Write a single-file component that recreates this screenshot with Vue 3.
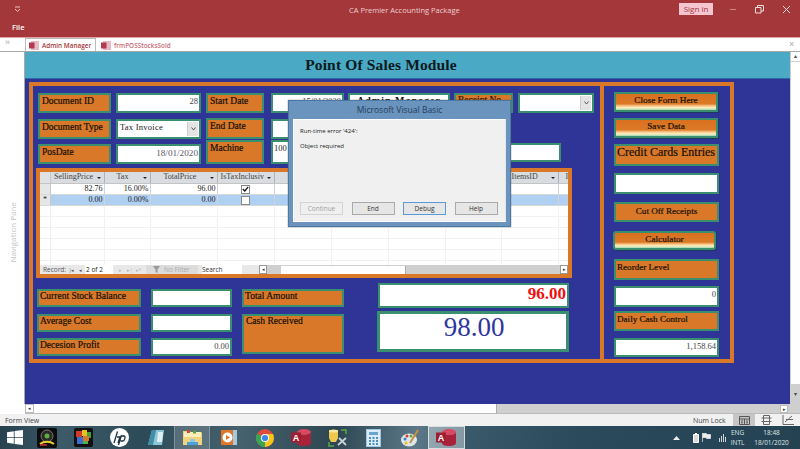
<script setup>
const columns = [
  { name: 'SellingPrice', cls: 'c1' }, { name: 'Tax', cls: 'c2' }, { name: 'TotalPrice', cls: 'c3' },
  { name: 'IsTaxInclusiv', cls: 'c4' }, { name: '', cls: 'c5' }, { name: '', cls: 'c6' },
  { name: '', cls: 'c7' }, { name: '', cls: 'c8' }, { name: 'ItemsID', cls: 'c9' }
]
const blankCols = ['c5', 'c6', 'c7', 'c8', 'c9']
const emptyRows = [1, 2, 3, 4, 5, 6]
</script>

<template>
  <div class="app">
    <header class="titlebar">
      <div class="title-top">
        <svg class="qa" width="8" height="6" viewBox="0 0 8 6"><path d="M1 1h5M1 3l2.500 2.500L6 3" fill="none" stroke="#e8c4c6" stroke-width="1"/></svg>
        <span class="app-title">CA Premier Accounting Package</span>
        <span class="signin">Sign in</span>
        <div class="winctl">
          <svg width="8" height="8" viewBox="0 0 8 8"><path d="M1 4.500h6" stroke="#c98a8c"/></svg>
          <svg width="9" height="9" viewBox="0 0 9 9"><path d="M.5 2.500h5.500v5.500H.5zM2.500 2.500V.5H8.500V6H6" fill="none" stroke="#f3dcdd"/></svg>
          <svg width="9" height="9" viewBox="0 0 9 9"><path d="M1 1l7 7M8 1L1 8" stroke="#f3dcdd"/></svg>
        </div>
      </div>
      <div class="file">File</div>
    </header>

    <div class="tabs">
      <span class="chevrons">»</span>
      <div class="tab active">
        <svg class="tabicon" width="10" height="9" viewBox="0 0 10 9"><rect x="2" y="0" width="8" height="9" fill="#e8b8c4"/><rect x="0" y="1.500" width="5.500" height="6" fill="#b23a50"/></svg>
        <span>Admin Manager</span>
      </div>
      <div class="tab">
        <svg class="tabicon" width="10" height="9" viewBox="0 0 10 9"><rect x="2" y="0" width="8" height="9" fill="#e8b8c4"/><rect x="0" y="1.500" width="5.500" height="6" fill="#b23a50"/></svg>
        <span>frmPOSStocksSold</span>
      </div>
      <span class="tabclose">×</span>
    </div>

    <div class="main">
      <aside class="nav"><span>Navigation Pane</span></aside>
      <div class="form">
        <div class="form-header">Point Of Sales Module</div>
        <div class="canvas">
          <div class="frame">
            <section class="left">
              <div class="top-grid">
                <div class="lbl">Document ID</div>
                <div class="inp num">28</div>
                <div class="lbl">Start Date</div>
                <div class="inp num date-start ml2">15/01/2020</div>
                <div class="inp admin">Admin Manager</div>
                <div class="lbl clip">Receipt No</div>
                <div class="inp combo"><i class="drop"><svg width="5" height="4" viewBox="0 0 5 4"><path d="M.5 .5l2 2.500 2-2.500" fill="none" stroke="#555"/></svg></i></div>

                <div class="lbl">Document Type</div>
                <div class="inp combo type">Tax Invoice<i class="drop"><svg width="5" height="4" viewBox="0 0 5 4"><path d="M.5 .5l2 2.500 2-2.500" fill="none" stroke="#555"/></svg></i></div>
                <div class="lbl up1">End Date</div>
                <div class="inp ml2"></div>
                <div></div>
                <div class="btn-plain view">View Receipts</div>

                <div class="lbl">PosDate</div>
                <div class="inp num date">18/01/2020</div>
                <div class="lbl up4">Machine</div>
                <div class="inp up4 mach ml2">100</div>
                <div></div>
                <div class="inp wide-inp"></div>
              </div>

              <div class="subform">
                <div class="sheet">
                  <div class="row head">
                    <div class="sel"></div>
                    <div v-for="c in columns" :key="c.cls" class="cell" :class="c.cls">
                      <span>{{ c.name }}</span><b v-if="c.name" class="caret"></b>
                    </div>
                    <div class="cell last">I</div>
                  </div>
                  <div class="row">
                    <div class="sel"></div>
                    <div class="cell c1 r">82.76</div><div class="cell c2 r">16.00%</div><div class="cell c3 r">96.00</div>
                    <div class="cell c4 ck"><span class="box"><svg width="7" height="6" viewBox="0 0 7 6"><path d="M.8 3l2 2L6.200 .8" fill="none" stroke="#111" stroke-width="1.300"/></svg></span></div>
                    <div v-for="b in blankCols" :key="b" class="cell" :class="b"></div><div class="cell last"></div>
                  </div>
                  <div class="row selrow">
                    <div class="sel star">*</div>
                    <div class="cell c1 r">0.00</div><div class="cell c2 r">0.00%</div><div class="cell c3 r">0.00</div>
                    <div class="cell c4 ck"><span class="box"></span></div>
                    <div v-for="b in blankCols" :key="b" class="cell" :class="b"></div><div class="cell last"></div>
                  </div>
                  <div v-for="n in emptyRows" :key="n" class="row empty">
                    <div class="sel"></div>
                    <div v-for="c in columns" :key="c.cls" class="cell" :class="c.cls"></div>
                    <div class="cell last"></div>
                  </div>
                </div>
                <div class="recnav">
                  <span class="rec">Record:</span>
                  <span class="arrow">|◂</span><span class="arrow">◂</span>
                  <span class="cur">2 of 2</span>
                  <span class="arrow off">▸</span><span class="arrow off">▸|</span><span class="arrow off">▸*</span>
                  <span class="filter">
                    <svg width="8" height="8" viewBox="0 0 8 8"><path d="M0 0h7L4.500 3.500V7L2.500 6V3.500z" fill="#9a9a9a"/></svg>
                    No Filter
                  </span>
                  <span class="search">Search</span>
                  <div class="hsb">
                    <span class="sbtn">◂</span>
                    <span class="thumb"></span>
                    <span class="sbtn end">▸</span>
                  </div>
                </div>
              </div>

              <div class="bottom">
                <div class="bcol c-lab">
                  <div class="lbl b">Current Stock Balance</div>
                  <div class="lbl b">Average Cost</div>
                  <div class="lbl b">Decesion Profit</div>
                </div>
                <div class="bcol c-inp">
                  <div class="inp b"></div>
                  <div class="inp b"></div>
                  <div class="inp b num">0.00</div>
                </div>
                <div class="bcol c-tot">
                  <div class="lbl b">Total Amount</div>
                  <div class="lbl cash">Cash Received</div>
                </div>
                <div class="c-big">
                  <div class="total">96.00</div>
                  <div class="cashval">98.00</div>
                </div>
              </div>
            </section>

            <section class="right">
              <div class="bevel">Close Form Here</div>
              <div class="bevel m6">Save Data</div>
              <div class="lbl credit m6">Credit Cards Entries</div>
              <div class="inp rinp h21 m7"></div>
              <div class="btn-flat m8">Cut Off Receipts</div>
              <div class="bevel calc m9">Calculator</div>
              <div class="lbl rlab h21 m9">Reorder Level</div>
              <div class="inp rinp h21 m6 num">0</div>
              <div class="lbl rlab h20 m4">Daily Cash Control</div>
              <div class="inp rinp h19 m7 num">1,158.64</div>
            </section>
          </div>
        </div>
      </div>
      <div class="vsb">
        <span class="vbtn">▴</span>
        <span class="vthumb"></span>
        <span class="vbtn">▾</span>
      </div>

      <div class="dialog">
        <div class="dlg-title">Microsoft Visual Basic</div>
        <div class="dlg-body">
          <p class="msg">Run-time error '424':</p>
          <p class="msg second">Object required</p>
          <div class="dlg-btns">
            <span class="dbtn off">Continue</span>
            <span class="dbtn">End</span>
            <span class="dbtn focus">Debug</span>
            <span class="dbtn">Help</span>
          </div>
        </div>
      </div>
    </div>

    <div class="hscroll">
      <span class="hbtn">◂</span>
      <span class="hthumb"></span>
      <span class="hbtn right-b">▸</span>
    </div>

    <div class="status">
      <span class="fv">Form View</span>
      <span class="numlock">Num Lock</span>
      <span class="view on"><svg width="11" height="9" viewBox="0 0 11 9"><path d="M.5.5h10v8H.5zM.5 3h10M5.500 3v5.500M2 5h2M7 5h2M2 6.800h2M7 6.800h2" fill="none" stroke="#555"/></svg></span>
      <span class="view"><svg width="11" height="10" viewBox="0 0 11 10"><path d="M2.500 .5h6v9h-6zM.5 3h10M.5 6.500h10" fill="none" stroke="#666"/></svg></span>
      <span class="view"><svg width="12" height="10" viewBox="0 0 12 10"><path d="M1 0v9.500h11M3 7l7-6M4 4.500h7" fill="none" stroke="#666"/></svg></span>
    </div>

    <footer class="taskbar">
      <div class="start">
        <svg width="16" height="15" viewBox="0 0 16 15"><path d="M0 2.200L6.800 1.200V7H0zM7.600 1.100L16 0V7H7.600zM0 7.800H6.800V13.700L0 12.800zM7.600 7.800H16V15L7.600 13.900z" fill="#fff"/></svg>
      </div>
      <div class="tb">
        <svg width="20" height="20" viewBox="0 0 20 20"><rect width="20" height="20" rx="2" fill="#0c0c0c"/><circle cx="10" cy="8" r="6" fill="#2a2a2a" stroke="#777"/><circle cx="10" cy="8" r="2.500" fill="#5fae3c"/><path d="M3 16c4-3 10-3 14 0" stroke="#e8d030" stroke-width="2" fill="none"/><path d="M3 17h7" stroke="#d03030" stroke-width="1.500"/></svg>
      </div>
      <div class="tb">
        <svg width="19" height="19" viewBox="0 0 19 19"><rect width="19" height="19" rx="2" fill="#111"/><rect x="2" y="3" width="6" height="6" fill="#d23a2a"/><rect x="8" y="2" width="5" height="6" fill="#e8c020"/><rect x="13" y="4" width="4" height="6" fill="#3fa040"/><rect x="3" y="9" width="6" height="7" fill="#3a6fd0"/><rect x="9" y="8" width="6" height="5" fill="#d8762a"/><rect x="9" y="13" width="5" height="3" fill="#58b040"/></svg>
      </div>
      <div class="tb">
        <svg width="19" height="19" viewBox="0 0 19 19"><circle cx="9.500" cy="9.500" r="9.500" fill="#fff"/><path d="M7.500 3.500L4 15M7 9h3L8 15M10 9l-1.500 6M11.500 7l-3 10M11.500 8h2.500c1 0 1.200 .8 1 1.600l-.6 2c-.2 .8-.8 1.400-1.800 1.400h-2" fill="none" stroke="#1c3040" stroke-width="1.300"/></svg>
      </div>
      <div class="tb">
        <svg width="18" height="17" viewBox="0 0 18 17"><path d="M5 1h12l-2 15H1z" fill="#8ec6d8"/><path d="M5 1h4L6 16H1z" fill="#3f8fa8"/><path d="M11 3h5l-1 10h-5z" fill="#dff0f4"/></svg>
      </div>
      <div class="tb hl">
        <svg width="19" height="17" viewBox="0 0 19 17"><path d="M0 2h7l1 1.500h11V16H0z" fill="#f2d27a"/><rect x="1" y="3" width="17" height="5" fill="#fbeeb8"/><rect x="4" y="1" width="3" height="3" fill="#d04a3a"/><rect x="10" y="1.500" width="3" height="3" fill="#58a040"/><path d="M4 13h11v3H4z" fill="#4aa0d8"/><path d="M7 10h5v3H7z" fill="#8cc8e8"/></svg>
      </div>
      <div class="tb">
        <svg width="16" height="15" viewBox="0 0 16 15"><rect width="16" height="15" fill="#a8c8dc"/><rect x="0" y="0" width="12" height="15" fill="#e0762a"/><circle cx="6.500" cy="7.500" r="5" fill="#fff"/><path d="M5 5l4 2.500L5 10z" fill="#e0762a"/></svg>
      </div>
      <div class="tb">
        <svg width="18" height="18" viewBox="0 0 18 18"><circle cx="9" cy="9" r="9" fill="#dd4b3e"/><path d="M9 9L1.200 4.500A9 9 0 0 0 9 18z" fill="#3aa655"/><path d="M9 9v9A9 9 0 0 0 17 5H9z" fill="#f5c518"/><circle cx="9" cy="9" r="4" fill="#fff"/><circle cx="9" cy="9" r="3.100" fill="#3f86e8"/></svg>
      </div>
      <div class="tb">
        <svg width="20" height="17" viewBox="0 0 20 17"><ellipse cx="13" cy="3" rx="7" ry="3" fill="#d84a60"/><path d="M6 3v11c0 1.700 3 3 7 3s7-1.300 7-3V3c0 1.700-3 3-7 3S6 4.700 6 3z" fill="#a8233a"/><rect y="3.500" width="10" height="10" fill="#9e1f32"/><text x="5" y="11.500" class="a-letter">A</text></svg>
      </div>
      <div class="tb">
        <svg width="20" height="18" viewBox="0 0 20 18"><path d="M1 1h9v8l-2 4H3L1 9z" fill="#f0c850"/><ellipse cx="5.500" cy="2" rx="4.500" ry="1.500" fill="#f8e8a0"/><path d="M13 1h5v4M1 13v4h5" fill="none" stroke="#58a848" stroke-width="1.500"/><path d="M10 16l8-7M11 9l7 7" stroke="#c8d0d8" stroke-width="1.800"/></svg>
      </div>
      <div class="tb">
        <svg width="15" height="18" viewBox="0 0 15 18"><rect width="15" height="18" fill="#9cc8e4"/><rect x="1" y="1" width="13" height="16" fill="#dcecf6"/><rect x="3" y="3" width="9" height="3" fill="#6aa4cc"/><path d="M3 8h2v2H3zM6.500 8h2v2h-2zM10 8h2v2h-2zM3 11h2v2H3zM6.500 11h2v2h-2zM10 11h2v2h-2zM3 14h2v2H3zM6.500 14h2v2h-2zM10 14h2v2h-2z" fill="#4d8fbc"/></svg>
      </div>
      <div class="tb">
        <svg width="19" height="18" viewBox="0 0 19 18"><ellipse cx="8" cy="11" rx="8" ry="6.500" fill="#dfe6ea"/><circle cx="4" cy="10" r="1.500" fill="#3a7fd0"/><circle cx="6" cy="7" r="1.500" fill="#d83a30"/><circle cx="10" cy="7" r="1.500" fill="#58a848"/><circle cx="5" cy="14" r="1.500" fill="#e8c020"/><path d="M9 14L17 1" stroke="#c89040" stroke-width="2"/></svg>
      </div>
      <div class="tb hl2">
        <svg width="20" height="17" viewBox="0 0 20 17"><ellipse cx="13" cy="3" rx="7" ry="3" fill="#d84a60"/><path d="M6 3v11c0 1.700 3 3 7 3s7-1.300 7-3V3c0 1.700-3 3-7 3S6 4.700 6 3z" fill="#a8233a"/><rect y="3.500" width="10" height="10" fill="#9e1f32"/><text x="5" y="11.500" class="a-letter">A</text></svg>
      </div>
      <div class="tray">
        <svg class="t1" width="7" height="4" viewBox="0 0 7 4"><path d="M0 4l3.500-4L7 4z" fill="#eee"/></svg>
        <svg class="t2" width="6" height="10" viewBox="0 0 6 10"><path d="M.5 1.500h5v8h-5zM2 .5h2" fill="#ddd" stroke="#fff"/></svg>
        <svg class="t3" width="9" height="9" viewBox="0 0 9 9"><path d="M.5 0v9M.5 .5h4v1h4v4h-4v-1h-4" fill="#eee" stroke="#eee" stroke-width=".7"/></svg>
        <svg class="t4" width="8" height="9" viewBox="0 0 8 9"><path d="M.5 5v4M2.500 3v6M4.500 1v8M6.500 4v5" stroke="#cfd6d8"/></svg>
        <div class="lang"><span>ENG</span><span>INTL</span></div>
        <div class="clock"><span>18:48</span><span>18/01/2020</span></div>
      </div>
    </footer>
  </div>
</template>

<style>
html, body { margin: 0; background: #fff; overflow: hidden; }
</style>

<style scoped>
.app { width: 800px; height: 449px; display: flex; flex-direction: column; overflow: hidden; font-family: "Liberation Sans", sans-serif; font-size: 8px; color: #222; }

.titlebar { height: 37px; background: #a4373a; border-bottom: 1px solid #e0a4a8; box-sizing: content-box; color: #fff; }
.title-top { height: 18px; display: flex; align-items: center; position: relative; }
.qa { margin-left: 14px; }
.app-title { position: absolute; left: 349px; top: 5px; color: #ecd0d1; font-family: "Open Sans", sans-serif; font-size: 7.500px; }
.signin { position: absolute; left: 679px; top: 3px; width: 34px; height: 12px; background: #f5c6cf; color: #a4373a; text-align: center; line-height: 12px; font-family: "Open Sans", sans-serif; font-size: 8px; }
.winctl { position: absolute; left: 729px; top: 5px; width: 62px; display: flex; justify-content: space-between; }
.file { margin: 4px 0 0 12px; font-family: "Open Sans", sans-serif; font-size: 7.500px; font-weight: 600; color: #fff; }

.tabs { height: 13px; display: flex; align-items: flex-end; position: relative; background: #fff; border-bottom: 1px solid #a8a8a8; }
.chevrons { position: absolute; left: 5px; top: -1px; color: #aaa; font-size: 9px; }
.tab { height: 13px; margin-left: 25px; width: 71px; display: flex; align-items: center; gap: 3px; padding-left: 3px; box-sizing: border-box; font-family: "Open Sans", sans-serif; font-size: 6.400px; font-weight: 600; color: #a4373a; white-space: nowrap; border-top: 1px solid #bbb; border-left: 1px solid #bbb; border-right: 1px solid #bbb; background: #fff; }
.tab + .tab { margin-left: 1px; width: 80px; color: #c86a74; border-color: transparent; }
.tabicon { flex: none; }
.tabclose { position: absolute; left: 789px; top: 0; color: #aaa; font-size: 9px; line-height: 12px; }

.main { height: 352px; display: flex; position: relative; }
.nav { width: 24px; border-right: 1px solid #a8a8a8; display: flex; align-items: center; justify-content: center; background: #fff; }
.nav span { writing-mode: vertical-rl; transform: rotate(180deg); color: #c4c4c4; font-size: 8px; font-family: "Open Sans", sans-serif; margin-top: 8px; white-space: nowrap; }
.form { width: 765px; display: flex; flex-direction: column; }
.form-header { height: 26px; background: #4aa9c4; border-bottom: 1px solid #2e6aa0; text-align: center; font-family: "Liberation Serif", serif; font-weight: bold; font-size: 15.500px; letter-spacing: .15px; line-height: 26px; color: #0b1a20; padding-right: 53px; }
.canvas { flex: 1; background: #2e3596; padding: 3px 0 0 4px; }

.frame { width: 705px; height: 281px; box-sizing: border-box; border: 4px solid #d97828; display: flex; }
.left { width: 564px; flex: none; border-right: 4px solid #d97828; padding: 7px 0 0 3px; }
.right { flex: 1; display: flex; flex-direction: column; padding: 6px 0 0 10px; }

.top-grid { display: grid; grid-template-columns: 73px 85px 58px 75px 101px 58px 76px; grid-template-rows: 20px 20px 20px; column-gap: 5px; row-gap: 5.500px; margin-left: 2px; }
.ml2 { margin-left: 2px; }

.lbl { box-sizing: border-box; background: #d97828; border: 2px solid #3a8f6f; font-family: "Liberation Serif", serif; font-size: 9.500px; color: #14100a; padding: 0 2px; line-height: 12px; white-space: nowrap; overflow: hidden; -webkit-text-stroke: .2px #14100a; }
.clip { color: #3a1c08; line-height: 11px; margin-left: -1px; }
.up1 { margin-top: -1px; }
.up4 { margin-top: -4px; }
.inp { box-sizing: border-box; background: #fff; border: 2px solid #3a8f6f; font-family: "Liberation Serif", serif; font-size: 8.500px; line-height: 12px; color: #444; padding: 0 1px; white-space: nowrap; overflow: hidden; position: relative; }
.num { text-align: right; }
.date { font-size: 9.200px; color: #5a5a6a; line-height: 14px; }
.date-start { font-size: 8.500px; }
.admin { font-weight: bold; font-size: 10px; text-align: center; color: #111; letter-spacing: 1px; margin-left: -1px; }
.combo { padding-right: 12px; }
.type { color: #222; font-size: 8.500px; line-height: 13px; letter-spacing: .25px; padding-left: 2px; }
.drop { position: absolute; right: 1px; top: 1px; bottom: 1px; width: 10px; background: #e4e4e4; border-left: 1px solid #ccc; display: flex; align-items: center; justify-content: center; }
.mach { font-size: 8.500px; color: #222; }
.btn-plain { box-sizing: border-box; grid-column: span 2; width: 106px; height: 18px; margin-left: -1px; background: #d97828; border: 1px solid #2f7fb0; box-shadow: 2px 2px 0 #203a70; font-family: "Liberation Serif", serif; font-size: 9.500px; font-weight: bold; text-align: right; padding: 1px 5px 0 0; color: #14100a; }
.wide-inp { width: 107px; height: 19px; margin: -1px 0 0 -1px; grid-column: span 2; }

.subform { width: 536px; height: 110px; box-sizing: border-box; border: 4px solid #d97828; margin-top: 4px; background: #fff; display: flex; flex-direction: column; }
.sheet { height: 93px; overflow: hidden; }
.row { display: flex; height: 11px; box-sizing: border-box; border-bottom: 1px solid #d8d8d8; font-family: "Liberation Serif", serif; font-size: 8px; line-height: 10px; color: #222; }
.row.head { height: 12px; background: #d9dce0; border-bottom: 1px solid #c4c4c4; color: #444; }
.row.empty { border-bottom: 1px solid #f2f2f2; }
.row.selrow { background: #b0d0f2; }
.sel { width: 11px; flex: none; background: #e6e6e6; border-right: 1px solid #c8c8c8; box-sizing: border-box; text-align: center; }
.row.head .sel { background: #dfe1e4; }
.empty .sel { background: #fff; border-right: 1px solid #eee; }
.star { font-size: 8px; }
.cell { box-sizing: border-box; flex: none; border-right: 1px solid #d4d4d4; padding: 0 1px; white-space: nowrap; position: relative; overflow: hidden; }
.head .cell { padding-left: 3px; border-right: 1px solid #b4b4b4; }
.head .c2 { padding-left: 12px; }
.head .c3 { padding-left: 13px; }
.head .c9 { padding-left: 10px; }
.head .last { padding-left: 7px; }
.empty .cell { border-right: 1px solid #f2f2f2; }
.r { text-align: right; }
.c1 { width: 53.500px; } .c2 { width: 46px; } .c3 { width: 67px; } .c4 { width: 57px; }
.c5 { width: 57px; } .c6 { width: 57px; } .c7 { width: 57px; } .c8 { width: 56px; } .c9 { width: 57px; }
.last { width: 10px; }
.caret { position: absolute; right: 3px; top: 5px; width: 0; height: 0; border-left: 2px solid transparent; border-right: 2px solid transparent; border-top: 2px solid #222; }
.ck { display: flex; justify-content: center; align-items: center; }
.box { width: 7px; height: 7px; background: #fff; border: 1px solid #888; display: flex; align-items: center; justify-content: center; }

.recnav { flex: 1; display: flex; align-items: center; background: #e8e8e8; font-family: "Open Sans", sans-serif; font-size: 6.500px; color: #555; white-space: nowrap; }
.rec { margin-left: 3px; width: 24px; }
.arrow { width: 9px; text-align: center; font-size: 5px; color: #555; }
.arrow.off { color: #b4b4b4; }
.cur { width: 28px; height: 9px; background: #fff; color: #222; line-height: 9px; margin-right: 3px; padding-left: 1px; box-sizing: border-box; }
.filter { width: 52px; height: 9px; margin-left: 3px; background: #dcdcdc; color: #aaa; display: flex; align-items: center; gap: 3px; padding-left: 7px; box-sizing: border-box; }
.search { width: 40px; height: 9px; margin-left: 4px; background: #fff; color: #333; line-height: 9px; }
.hsb { margin-left: 17px; flex: 1; height: 9px; background: #cfcfcf; display: flex; align-items: center; }
.sbtn { width: 8px; height: 9px; background: #fff; border: 1px solid #999; box-sizing: border-box; font-size: 5px; line-height: 7px; text-align: center; color: #333; }
.sbtn.end { margin-left: auto; }
.thumb { width: 124px; height: 8px; margin-left: 14px; background: #fff; border-right: 1px solid #aaa; }

.bottom { display: flex; margin: 5px 0 0 1px; }
.bcol { display: flex; flex-direction: column; padding-top: 6px; }
.c-lab { width: 104px; gap: 6.500px; }
.c-inp { width: 81px; margin-left: 10px; gap: 6.500px; }
.c-tot { width: 102px; margin-left: 10px; gap: 7px; }
.lbl.b { height: 18px; line-height: 11px; padding-left: 1px; }
.inp.b { height: 18px; }
.cash { height: 40px; line-height: 11px; }
.c-big { margin-left: 34px; width: 191px; display: flex; flex-direction: column; gap: 3px; }
.total { box-sizing: border-box; height: 25px; background: #fff; border: 2px solid #3a8f6f; text-align: right; color: #f01010; font-family: "Liberation Serif", serif; font-weight: bold; font-size: 17px; line-height: 18px; padding-right: 1px; }
.cashval { box-sizing: border-box; height: 41px; margin-left: -1px; background: #fff; border: 3px solid #3a8f6f; text-align: center; color: #2e35a0; font-family: "Liberation Serif", serif; font-size: 27px; line-height: 27px; padding-left: 2px; }

.bevel { box-sizing: border-box; width: 104px; height: 20px; border: 2px solid #3a8f6f; box-shadow: 1px 1px 0 #1c3a60; background: linear-gradient(#d97020 0, #dc7a28 62%, #f4b878 72%, #fff0c0 86%, #a0d8b0 100%); text-align: center; font-family: "Liberation Serif", serif; font-size: 9.200px; color: #14100a; line-height: 13px; -webkit-text-stroke: .2px #14100a; }
.calc { height: 19px; margin-left: -1px; width: 103px; border-radius: 3px; }
.credit { width: 105px; height: 22px; font-size: 12px; line-height: 13px; padding: 0 1px; }
.rinp { width: 105px; }
.rlab { width: 105px; font-size: 9.100px; line-height: 13px; padding-left: 1px; }
.btn-flat { box-sizing: border-box; width: 105px; height: 20px; background: #d97828; border: 2px solid #3a8f6f; text-align: center; font-family: "Liberation Serif", serif; font-size: 9.100px; color: #14100a; line-height: 14px; -webkit-text-stroke: .2px #14100a; }
.h19 { height: 19px; } .h20 { height: 20px; } .h21 { height: 21px; }
.m4 { margin-top: 4px; } .m6 { margin-top: 6px; } .m7 { margin-top: 7px; } .m8 { margin-top: 8px; } .m9 { margin-top: 9px; }

.vsb { width: 10px; background: #cfcfcf; display: flex; flex-direction: column; position: relative; border-left: 1px solid #ccc; box-sizing: border-box; }
.vbtn { height: 9px; background: #fff; font-size: 6px; line-height: 9px; text-align: center; color: #444; }
.vbtn:last-child { background: #cfcfcf; margin-top: auto; margin-bottom: 5px; }
.vthumb { height: 322px; background: #fff; margin-top: 1px; }

.dialog { position: absolute; left: 288px; top: 48px; width: 223px; height: 127px; box-sizing: border-box; background: #6a93bd; border: 1px solid #4d78a4; display: flex; flex-direction: column; padding: 0 4px 4px 4px; box-shadow: 0 0 1px #555; }
.dlg-title { height: 18px; text-align: center; font-family: "Open Sans", sans-serif; font-size: 8.500px; line-height: 18px; color: #24405e; }
.dlg-body { flex: 1; background: #f0f0f0; position: relative; padding: 7px 6px 0; border: 1px solid #fff; border-right-color: #dfe6ee; box-sizing: border-box; font-family: "Open Sans", sans-serif; font-size: 6px; color: #222; display: flex; flex-direction: column; }
.msg { margin: 0; line-height: 9px; }
.second { margin-top: 6px; }
.dlg-btns { margin-top: auto; margin-bottom: 6px; display: flex; gap: 8.500px; }
.dbtn { box-sizing: border-box; width: 43px; height: 13px; background: #e6e6e6; border: 1px solid #aaa; text-align: center; line-height: 11px; color: #333; font-size: 6.500px; }
.dbtn.off { color: #a0a0a0; border-color: #d4d4d4; background: #efefef; }
.dbtn.focus { border-color: #5a9ad8; }

.hscroll { height: 10px; margin-left: 25px; background: #cfcfcf; display: flex; align-items: stretch; border-bottom: 1px solid #bbb; box-sizing: border-box; position: relative; }
.hbtn { width: 9px; background: #fff; border: 1px solid #bbb; box-sizing: border-box; font-size: 5px; line-height: 7px; text-align: center; color: #333; }
.hthumb { width: 462px; background: #fff; border-right: 1px solid #aaa; }
.right-b { position: absolute; left: 755px; top: 1px; width: 8px; height: 8px; }

.status { height: 12px; background: #f1f1f1; display: flex; align-items: center; font-family: "Open Sans", sans-serif; font-size: 7px; color: #444; }
.fv { margin-left: 5px; }
.numlock { margin-left: auto; width: 40px; }
.view { width: 22px; height: 12px; display: flex; align-items: center; justify-content: center; }
.view.on { background: #c6c6c6; }
.view:last-child { margin-right: 1px; }

.taskbar { flex: 1; display: flex; align-items: center; background: linear-gradient(100deg, #27404e 0, #3c5a68 8%, #2d4a58 18%, #46626e 30%, #2d4652 42%, #5c7888 52%, #3a5a6c 58%, #2b4a5c 72%, #244252 100%); }
.start { width: 29px; display: flex; justify-content: center; }
.tb { width: 36.300px; height: 23px; display: flex; align-items: center; justify-content: center; flex: none; }
.hl { background: rgba(255, 255, 255, .16); border-left: 1px solid rgba(255,255,255,.25); border-right: 1px solid rgba(255,255,255,.25); box-sizing: border-box; }
.hl2 { background: rgba(255, 255, 255, .38); border: 1px solid rgba(255,255,255,.65); box-sizing: border-box; }
.a-letter { font-family: "Liberation Sans", sans-serif; font-size: 9px; font-weight: bold; fill: #fff; text-anchor: middle; }
.tray { flex: 1; display: flex; align-items: center; color: #dfe6ea; font-family: "Open Sans", sans-serif; font-size: 6.500px; }
.t1 { margin-left: 208px; }
.t2 { margin-left: 13px; }
.t3 { margin-left: 3px; }
.t4 { margin-left: 8px; }
.lang, .clock { display: flex; flex-direction: column; align-items: center; line-height: 10px; }
.lang { width: 22px; }
.clock { width: 40px; margin-left: 3px; }
</style>
